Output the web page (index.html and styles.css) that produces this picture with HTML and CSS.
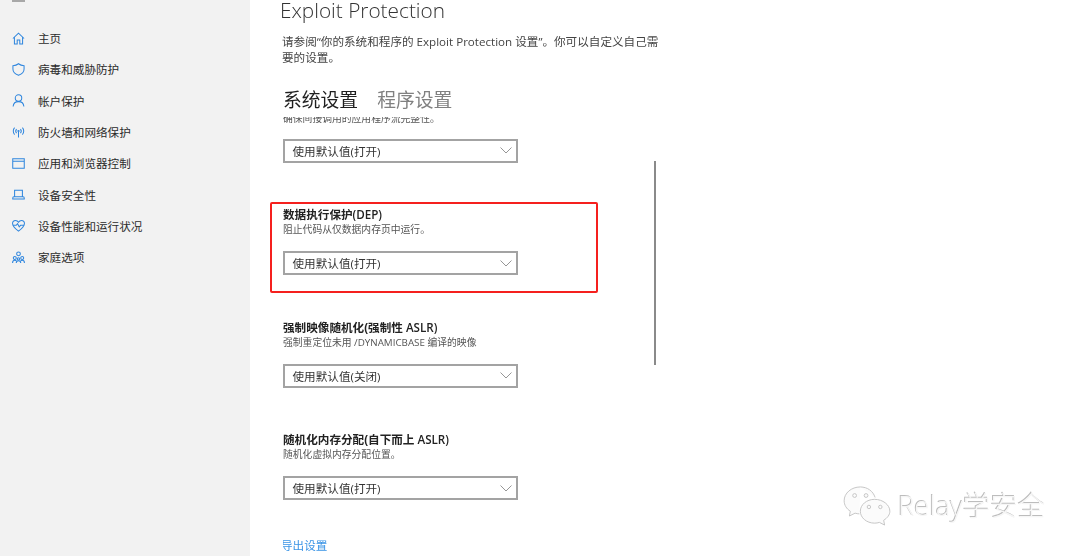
FILE: index.html
```html
<!DOCTYPE html>
<html lang="zh-CN">
<head>
  <meta charset="UTF-8">
  <title>Exploit Protection</title>
  <link rel="stylesheet" href="styles.css">
</head>
<body>
  <aside class="side">
    <div class="burger"></div>
    <ul class="nav">
      <li>
        <svg class="ico" viewBox="0 0 14 14"><path d="M1 7 7 1.200 13 7M2.600 5.600V13H5.600V8.600H8.400V13H11.400V5.600"/></svg>
        主页
      </li>
      <li>
        <svg class="ico" viewBox="0 0 14 14"><path d="M7 .8C5.400 2.200 3.400 2.900 1 2.900V6.500C1 9.800 3.200 12 7 13.300 10.800 12 13 9.800 13 6.500V2.900C10.600 2.900 8.600 2.200 7 .8Z"/></svg>
        病毒和威胁防护
      </li>
      <li>
        <svg class="ico" viewBox="0 0 14 14"><circle cx="7" cy="4.400" r="3.500"/><path d="M1.200 13.500C1.500 10.300 3.800 8.200 7 8.200S12.500 10.300 12.800 13.500"/></svg>
        帐户保护
      </li>
      <li>
        <svg class="ico" viewBox="0 0 14 14"><circle cx="7" cy="5.500" r=".7"/><path d="M7 6.500V12.500M4.900 3.300C3.900 4.500 3.900 6.500 4.900 7.700M9.100 3.300C10.100 4.500 10.100 6.500 9.100 7.700M2.800 1.800C.9 3.800.9 7.200 2.800 9.200M11.200 1.800C13.100 3.800 13.100 7.200 11.200 9.200"/></svg>
        防火墙和网络保护
      </li>
      <li>
        <svg class="ico" viewBox="0 0 14 14"><path d="M.8 1.800H13.200V12.200H.8ZM.8 4.500H13.200"/></svg>
        应用和浏览器控制
      </li>
      <li>
        <svg class="ico" viewBox="0 0 14 14"><path d="M2.800 2.500H11.200V9.500H2.800ZM.8 11.800H13.200V11C13.200 10.500 13 9.500 12 9.500H2C1 9.500.8 10.500.8 11Z"/></svg>
        设备安全性
      </li>
      <li>
        <svg class="ico" viewBox="0 0 14 14"><path d="M7 13C4 10.800.6 8 .6 4.800.6 2.800 2.100 1.500 3.800 1.500 5.200 1.500 6.300 2.200 7 3.400 7.700 2.200 8.800 1.500 10.200 1.500 11.900 1.500 13.400 2.800 13.400 4.800 13.400 8 10 10.800 7 13Z"/><path d="M1 6.800H4.500L6 5 7.800 8.500 9.200 6.800H13"/></svg>
        设备性能和运行状况
      </li>
      <li>
        <svg class="ico" viewBox="0 0 14 14"><circle cx="7" cy="3" r="2"/><circle cx="3" cy="7.500" r="1.600"/><circle cx="11" cy="7.500" r="1.600"/><circle cx="7" cy="8.500" r="1.300"/><path d="M.6 13C.6 11 1.500 10 3 10 3.800 10 4.300 10.200 4.800 10.700M13.400 13C13.400 11 12.500 10 11 10 10.200 10 9.700 10.200 9.200 10.700M4.600 13C4.600 11.300 5.500 10.500 7 10.500S9.400 11.300 9.400 13"/></svg>
        家庭选项
      </li>
    </ul>
  </aside>

  <main class="main">
    <h1 class="title">Exploit Protection</h1>
    <p class="intro">请参阅“你的系统和程序的 Exploit Protection 设置”。你可以自定义自己需要的设置。</p>
    <div class="tabs">
      <span class="tab active">系统设置</span>
      <span class="tab">程序设置</span>
    </div>

    <div class="scroller">
      <div class="list">
        <section class="item cut">
          <p>确保间接调用的应用程序流完整性。</p>
          <div class="drop">使用默认值(打开)<svg viewBox="0 0 12 7"><path d="M.5.5 6 6 11.500.5"/></svg></div>
        </section>
        <section class="item">
          <h2>数据执行保护<span>(DEP)</span></h2>
          <p>阻止代码从仅数据内存页中运行。</p>
          <div class="drop">使用默认值(打开)<svg viewBox="0 0 12 7"><path d="M.5.5 6 6 11.500.5"/></svg></div>
        </section>
        <section class="item">
          <h2>强制映像随机化(强制性<span> ASLR)</span></h2>
          <p>强制重定位未用 /DYNAMICBASE 编译的映像</p>
          <div class="drop">使用默认值(关闭)<svg viewBox="0 0 12 7"><path d="M.5.5 6 6 11.500.5"/></svg></div>
        </section>
        <section class="item last">
          <h2>随机化内存分配(自下而上<span> ASLR)</span></h2>
          <p>随机化虚拟内存分配位置。</p>
          <div class="drop">使用默认值(打开)<svg viewBox="0 0 12 7"><path d="M.5.5 6 6 11.500.5"/></svg></div>
        </section>
        <a class="export" href="#">导出设置</a>
      </div>
    </div>
    <div class="scrollbar"></div>
  </main>

  <div class="redbox"></div>

  <div class="mark">
    <svg class="mark-ico" viewBox="0 0 50 42">
      <path d="M18 1C8.500 1 1 7.500 1 15.500 1 20 3.500 24 7.500 26.500L6.500 31.500 12.500 28.500C14 29 15.500 29.200 17 29.300"/>
      <path d="M33.500 12C31.500 5.500 25.500 1 18 1"/>
      <path d="M33 14C24.500 14 18 19.700 18 26.500S24.500 39 33 39C34.800 39 36.500 38.700 38 38.200L43.500 41 42.500 36C46.500 33.500 49 30.200 49 26.500 49 19.700 41.500 14 33 14Z"/>
      <circle cx="12" cy="10" r="2"/><circle cx="24" cy="10" r="2"/>
      <circle cx="27" cy="22" r="1.800"/><circle cx="39" cy="22" r="1.800"/>
    </svg>
    <span>Relay学安全</span>
  </div>
</body>
</html>
```

FILE: styles.css
```css
* {
  padding: 0;
  margin: 0;
  box-sizing: border-box;
}
ul {
  list-style: none;
}
html, body {
  height: 100%;
  overflow: hidden;
}
body {
  display: flex;
  font-family: "Open Sans", "Noto Sans CJK SC", sans-serif;
  font-size: 11.6px;
  color: #2b2b2b;
  background: #fff;
  filter: blur(.35px);
}
.side {
  width: 250px;
  flex: none;
  background: #f2f2f2;
}
.burger {
  width: 13px;
  height: 2px;
  margin: 0 0 20.5px 12px;
  background: #a8a8a8;
}
.nav li {
  display: flex;
  align-items: center;
  gap: 13px;
  height: 31.3px;
  padding-left: 12px;
}
.ico {
  width: 13px;
  height: 13px;
  flex: none;
  fill: none;
  stroke: #2f86de;
  stroke-width: 1.1;
}
.main {
  position: relative;
  flex: 1;
  min-width: 0;
  display: flex;
  flex-direction: column;
  padding-left: 33px;
}
.title {
  font-size: 20.8px;
  font-weight: 300;
  line-height: 21px;
  margin-left: -3px;
  margin-bottom: 13px;
  color: #333;
}
.intro {
  width: 380px;
  line-height: 15.5px;
  margin-left: -1px;
  color: #444;
}
.tabs {
  display: flex;
  gap: 19px;
  margin-top: 23px;
  font-size: 18.8px;
  line-height: 24px;
  height: 29px;
  color: #808080;
}
.tab.active {
  color: #1f1f1f;
}
.scroller {
  flex: 1;
  min-height: 0;
  overflow: hidden;
}
.list {
  margin-top: -6.5px;
}
.item {
  height: 112.5px;
}
.item.cut {
  height: 96.5px;
}
.item.cut .drop {
  margin-top: 13px;
}
.item.last {
  height: 106px;
}
.item h2 {
  font-size: 11.6px;
  font-weight: 700;
  line-height: 15px;
  color: #222;
}
.item h2 span {
  font-weight: 600;
}
.item p {
  font-size: 9.8px;
  line-height: 15px;
  color: #555;
}
.drop {
  display: flex;
  align-items: center;
  justify-content: space-between;
  width: 235px;
  height: 24.4px;
  margin-top: 14px;
  padding: 0 4px 0 7.5px;
  border: 2px solid #a3a3a3;
  background: #fff;
  color: #333;
}
.drop svg {
  width: 12px;
  height: 7px;
  fill: none;
  stroke: #8a8a8a;
  stroke-width: .9;
}
.export {
  display: block;
  margin-left: -2px;
  color: #3a94e6;
  text-decoration: none;
  line-height: 15px;
}
.scrollbar {
  position: absolute;
  left: 404px;
  top: 161px;
  width: 2px;
  height: 204px;
  background: #8a8a8a;
}
.redbox {
  position: absolute;
  left: 270px;
  top: 202px;
  width: 328px;
  height: 91px;
  border: 2.5px solid #f5201e;
  border-radius: 2px;
}
.mark {
  position: absolute;
  left: 842px;
  top: 486px;
  display: flex;
  align-items: center;
  gap: 6px;
  font-size: 27.5px;
  font-weight: 300;
  line-height: 40px;
  color: #f6f6f6;
  text-shadow: -1px -1px 0 #bdbdbd, 1px 1px 0 #fff;
}
.mark-ico {
  width: 50px;
  height: 40px;
  fill: #fbfbfb;
  stroke: #c4c4c4;
  stroke-width: 1;
}
```
